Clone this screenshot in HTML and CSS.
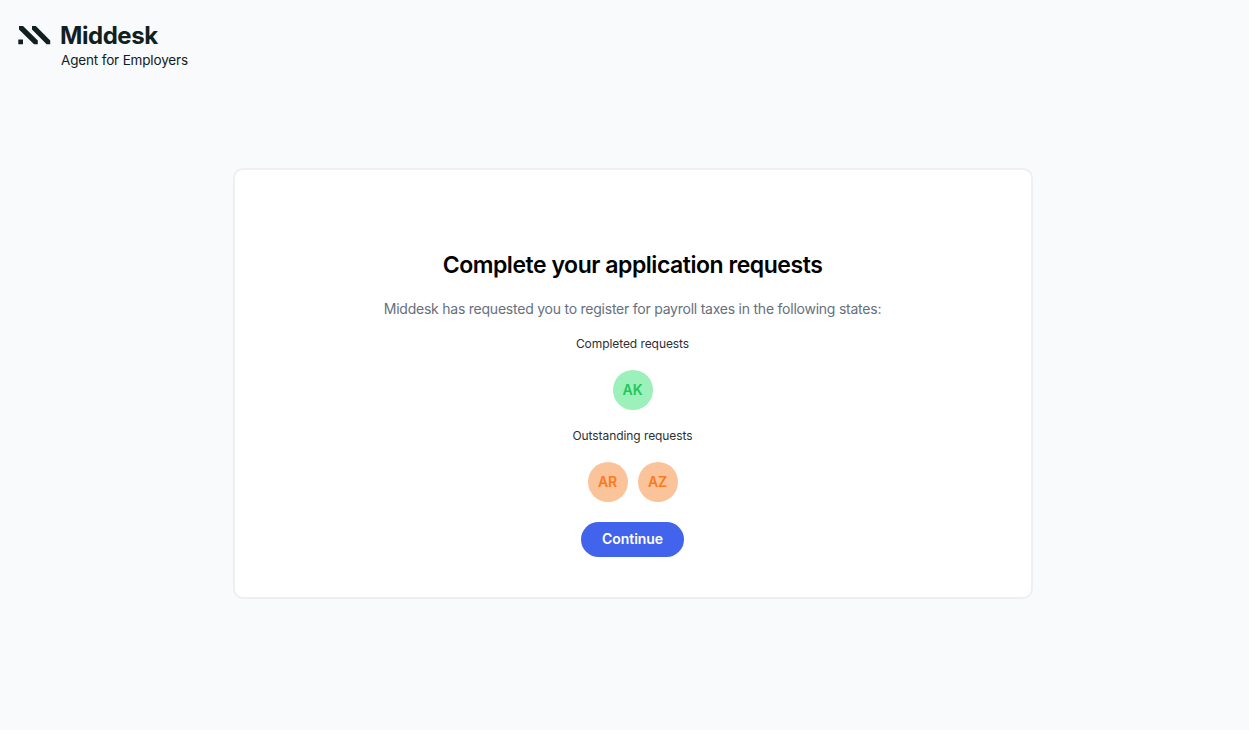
FILE: index.html
```html
<!DOCTYPE html>
<html lang="en">
<head>
<meta charset="utf-8">
<title>Middesk – Agent for Employers</title>
<link rel="stylesheet" href="styles.css">
</head>
<body>
<header class="header">
  <svg class="logo" width="34" height="20" viewBox="0 0 34 20" aria-hidden="true">
    <path d="M1 1H5L19.8 15.6V19.2H16L1 4.6Z M14 1H17.8L32.2 15.6V19.2H28.6L14 4.6Z M0.3 14.4H5V19.2H0.3Z" fill="#10201e"/>
  </svg>
  <div class="brand">
    <span class="brand-name">Middesk</span>
    <span class="brand-sub">Agent for Employers</span>
  </div>
</header>
<main class="main">
  <section class="card">
    <h1 class="title">Complete your application requests</h1>
    <p class="lead">Middesk has requested you to register for payroll taxes in the following states:</p>
    <p class="label">Completed requests</p>
    <div class="states"><div class="state done">AK</div></div>
    <p class="label">Outstanding requests</p>
    <div class="states"><div class="state todo">AR</div><div class="state todo">AZ</div></div>
    <button class="continue" type="button">Continue</button>
  </section>
</main>
</body>
</html>
```
FILE: styles.css
```css
* { box-sizing: border-box; margin: 0; }
body { min-height: 730px; background: #f9fafc; font-family: Inter, "Liberation Sans", sans-serif; color: #2e2f33; }
.header { display: flex; gap: 8px; height: 168px; padding: 25px 0 0 18px; color: #10201e; }
.brand { display: flex; flex-direction: column; align-items: flex-start; }
.brand-name { font-size: 24px; line-height: 21px; font-weight: 650; letter-spacing: -0.45px; }
.brand-sub { margin: 5px 0 0 1px; font-size: 13.5px; line-height: 18px; letter-spacing: -0.16px; }
.main { display: flex; justify-content: center; padding-left: 17px; }
.card { display: flex; flex-direction: column; align-items: center; width: 800px; height: 431px; padding-top: 80px; border: 2px solid #eceff4; border-radius: 10px; background: #fff; }
.title { margin-right: 1px; font-size: 23px; line-height: 30px; font-weight: 600; letter-spacing: -0.46px; color: #000; }
.lead { margin: 19px 1px 0 0; font-size: 14px; line-height: 20px; letter-spacing: -0.235px; color: #656f7e; }
.label { margin: 17px 1px 0 0; font-size: 12px; line-height: 16px; letter-spacing: -0.07px; }
.states { display: flex; gap: 10px; margin-top: 18px; }
.states + .label { margin-top: 18px; }
.state { display: flex; align-items: center; justify-content: center; width: 40px; height: 40px; padding: 0 1px 1px 0; border-radius: 50%; font-size: 14px; font-weight: 600; letter-spacing: -0.1px; }
.done { background: #9bf1b9; color: #1ec75b; }
.todo { background: #fbc399; color: #f97a1c; }
.continue { width: 103px; height: 35px; margin: 20px 1px 0 0; padding: 0 0 2px; border: 0; border-radius: 18px; background: #4263eb; color: #fff; font: 600 14px/33px Inter, sans-serif; letter-spacing: -0.05px; }
```
